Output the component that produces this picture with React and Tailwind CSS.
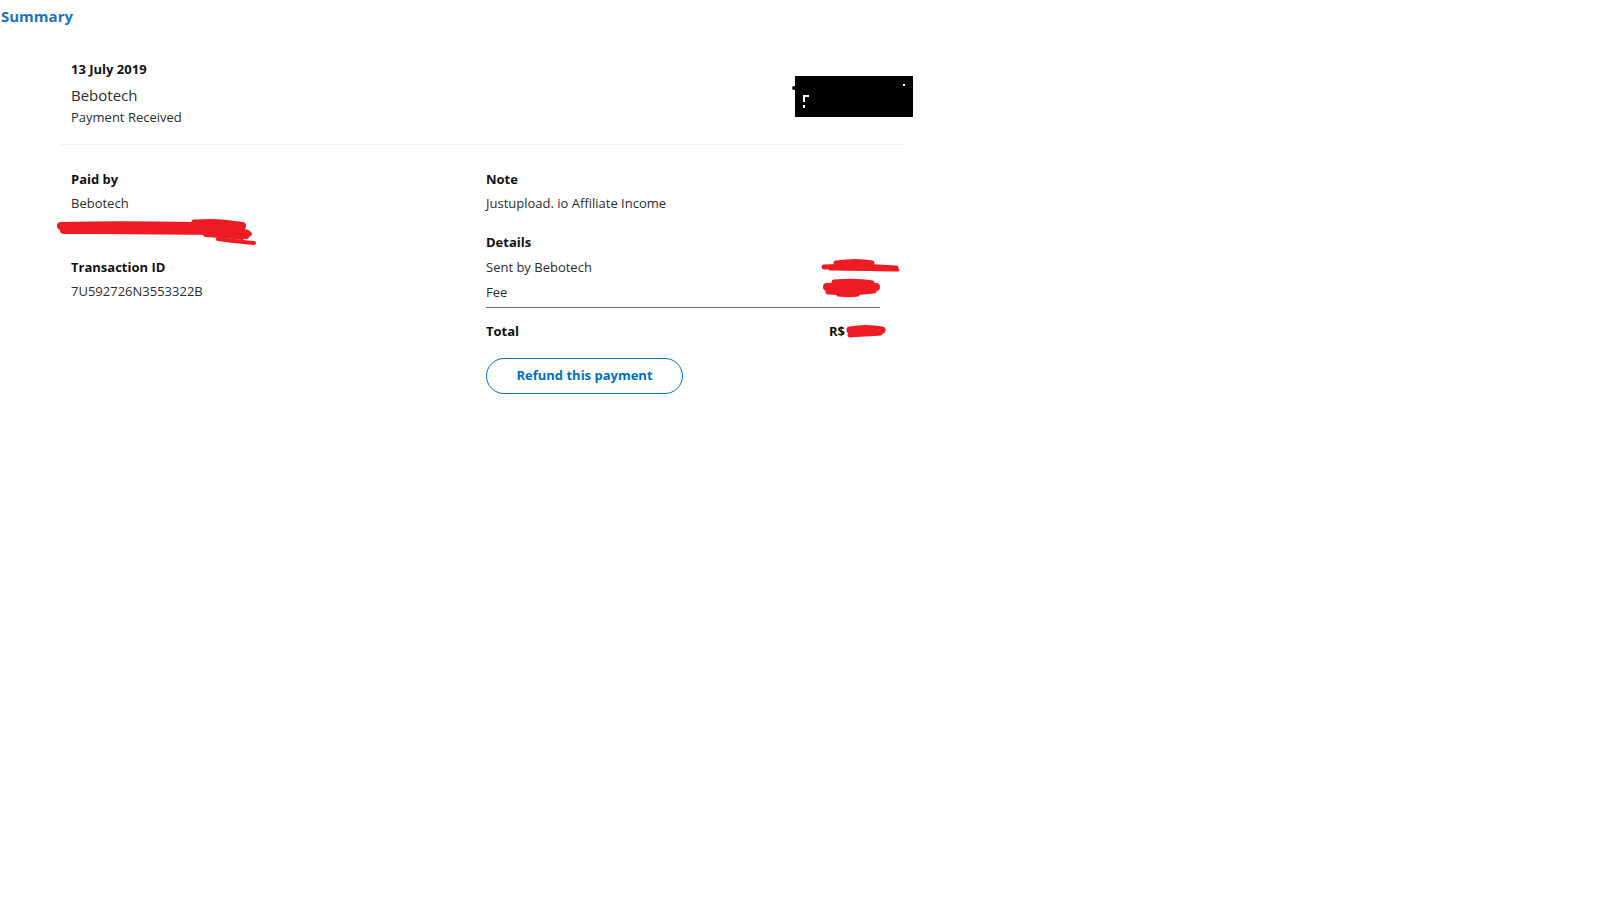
import React from "react";

// Hand-drawn red marker strokes covering private values
function Scribble({ width, height, strokes, className = "" }) {
  return (
    <svg
      width={width}
      height={height}
      viewBox={`0 0 ${width} ${height}`}
      className={className}
      fill="none"
    >
      {strokes.map((s, i) => (
        <path
          key={i}
          d={s.d}
          stroke="#ed1c24"
          strokeWidth={s.w}
          strokeLinecap="round"
          strokeLinejoin="round"
        />
      ))}
    </svg>
  );
}

function Redacted() {
  // black box with a couple of leftover white specks
  return (
    <div className="relative w-[118px] h-[41px] bg-black">
      <div className="absolute left-[8px] top-[19px] w-[6px] h-[2px] bg-white" />
      <div className="absolute left-[8px] top-[19px] w-[2px] h-[7px] bg-white" />
      <div className="absolute left-[8px] top-[29px] w-[2px] h-[3px] bg-white" />
      <div className="absolute right-[8px] top-[8px] w-[2px] h-[2px] bg-white" />
      <div className="absolute left-[-3px] top-[10px] w-[4px] h-[4px] rounded-full bg-black" />
    </div>
  );
}

function Label({ children, className = "" }) {
  return (
    <div className={`text-[13px] leading-[18px] font-bold text-[#111] ${className}`}>
      {children}
    </div>
  );
}

function Value({ children, className = "" }) {
  return (
    <div className={`text-[13px] leading-[18px] text-[#2c2e2f] ${className}`}>
      {children}
    </div>
  );
}

export default function App() {
  return (
    <div className="w-[1600px] h-[900px] bg-white font-['Open_Sans',sans-serif] overflow-hidden">
      <h1 className="pl-px pt-[6px] text-[15px] leading-5 font-bold text-[#1f72bd]">
        Summary
      </h1>

      <div className="ml-[60px] w-[844px] mt-[34px]">
        {/* Header */}
        <div className="flex justify-between border-b border-[#eef0f1] pb-[18px] pl-[11px]">
          <div>
            <Label>13 July 2019</Label>
            <div className="mt-[7px] text-[15px] leading-5 text-[#2c2e2f]">Bebotech</div>
            <Value className="mt-[3px]">Payment Received</Value>
          </div>
          <div className="mt-[16px] -mr-[9px]">
            <Redacted />
          </div>
        </div>

        {/* Body */}
        <div className="flex pl-[11px] pt-[25px]">
          <div className="w-[415px]">
            <Label>Paid by</Label>
            <div className="relative">
              <Value className="mt-[6px]">Bebotech</Value>
              <div className="h-[46px]" />
              <Scribble
                className="absolute left-[-15px] top-[23px]"
                width={204}
                height={30}
                strokes={[
                  { d: "M5 9 C40 8 90 8 140 9 C160 8 176 7 186 9", w: 8 },
                  { d: "M8 13 C60 13 110 14 170 14 C180 15 186 16 190 18", w: 8 },
                  { d: "M138 5 C152 4 168 4 180 7", w: 5 },
                  { d: "M150 17 C165 18 178 19 186 20", w: 6 },
                  { d: "M162 22 C176 24 188 25 198 26", w: 4 },
                  { d: "M180 14 C188 13 192 14 194 17", w: 4 },
                ]}
              />
            </div>
            <Label>Transaction ID</Label>
            <Value className="mt-[6px]">7U592726N3553322B</Value>
          </div>

          <div className="w-[394px]">
            <Label>Note</Label>
            <Value className="mt-[6px]">Justupload. io Affiliate Income</Value>

            <Label className="mt-[21px]">Details</Label>
            <div className="relative mt-[7px] flex justify-between">
              <Value>Sent by Bebotech</Value>
              <Scribble
                className="absolute left-[334px] top-[0px]"
                width={82}
                height={16}
                strokes={[
                  { d: "M4 9 C25 8 50 8 76 10", w: 5 },
                  { d: "M16 5 C30 3 42 3 52 5", w: 5 },
                  { d: "M10 11 C35 11 60 12 78 12", w: 3 },
                ]}
              />
            </div>
            <div className="relative mt-[7px] flex justify-between border-b border-[#6c7378] pb-[6px]">
              <Value>Fee</Value>
              <Scribble
                className="absolute left-[336px] top-[-5px]"
                width={60}
                height={20}
                strokes={[
                  { d: "M5 9 C20 8 38 8 54 9", w: 8 },
                  { d: "M12 4 C26 3 40 3 50 5", w: 5 },
                  { d: "M6 14 C22 15 36 15 52 13", w: 5 },
                  { d: "M16 17 C24 18 30 18 36 17", w: 3 },
                ]}
              />
            </div>
            <div className="relative mt-[14px] flex items-center justify-between">
              <Label>Total</Label>
              <div className="-mr-[6px] flex items-center">
                <Label>R$</Label>
                <Scribble
                  className="ml-[1px]"
                  width={40}
                  height={18}
                  strokes={[
                    { d: "M4 8 C14 6 26 6 36 8", w: 7 },
                    { d: "M4 13 C14 12 26 12 34 11", w: 5 },
                  ]}
                />
              </div>
            </div>

            <button className="mt-[18px] w-[197px] h-[36px] rounded-full border border-[#0070ba] text-[13px] font-bold text-[#0070ba] bg-white">
              Refund this payment
            </button>
          </div>
        </div>
      </div>
    </div>
  );
}
